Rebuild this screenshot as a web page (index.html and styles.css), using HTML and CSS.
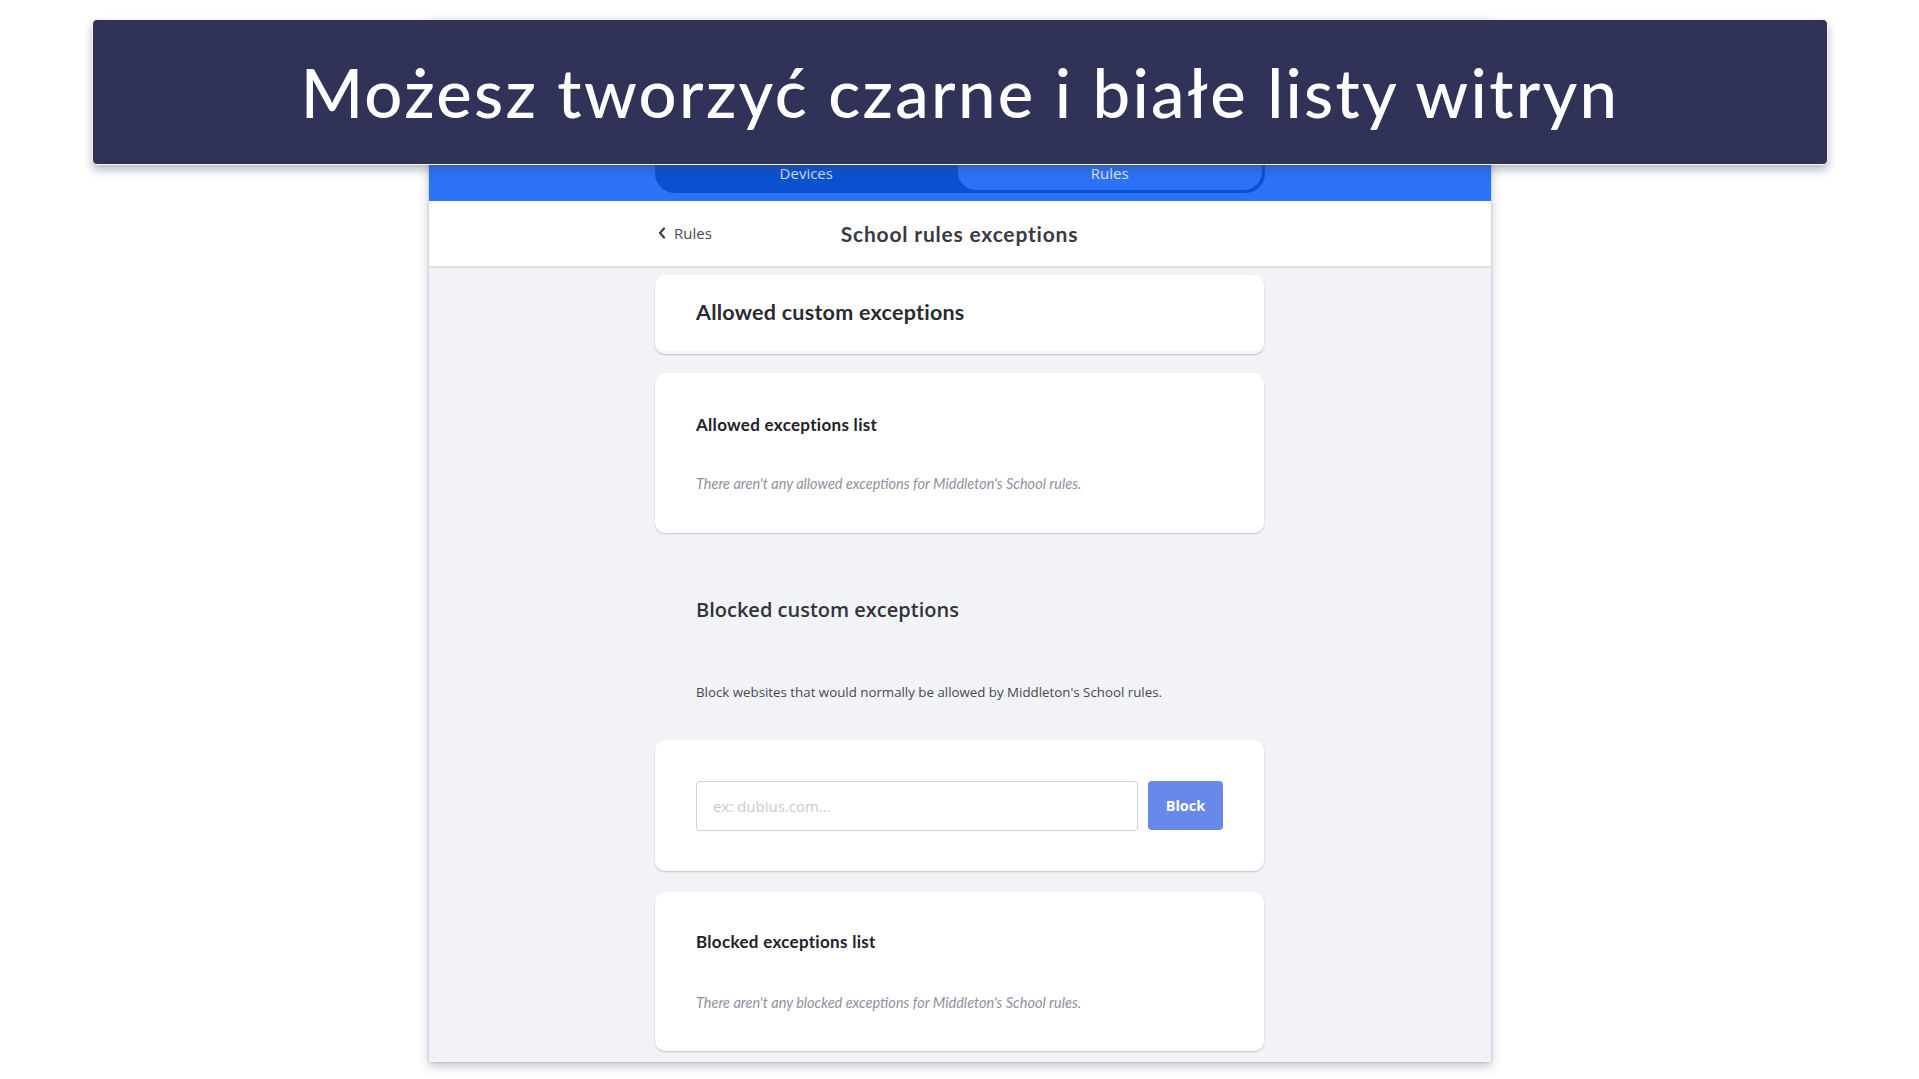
FILE: index.html
```html
<!DOCTYPE html>
<html lang="pl">
<head>
<meta charset="utf-8">
<title>School rules exceptions</title>
<link rel="stylesheet" href="styles.css">
</head>
<body>
<div class="stage">
  <div class="banner"><h1>Możesz tworzyć czarne i białe listy witryn</h1></div>
  <div class="panel">
    <div class="topbar">
      <div class="tabs">
        <div class="tab">Devices</div>
        <div class="tab active">Rules</div>
      </div>
    </div>
    <div class="header">
      <div class="header-inner">
        <a class="back"><svg width="8" height="12" viewBox="0 0 8 12"><polyline points="6,1.5 2,6 6,10.5" fill="none" stroke="#3c3c46" stroke-width="2.2" stroke-linejoin="round" stroke-linecap="round"/></svg><span>Rules</span></a>
        <h2 class="title">School rules exceptions</h2>
        <span></span>
      </div>
    </div>
    <div class="content">
      <div class="card card-head">
        <h3 class="card-title">Allowed custom exceptions</h3>
      </div>
      <div class="card card-list">
        <h4 class="list-title">Allowed exceptions list</h4>
        <p class="empty">There aren't any allowed exceptions for Middleton's School rules.</p>
      </div>
      <div class="section">
        <h3 class="section-title">Blocked custom exceptions</h3>
        <p class="section-desc">Block websites that would normally be allowed by Middleton's School rules.</p>
      </div>
      <div class="card card-form">
        <input class="site-input" type="text" placeholder="ex: dubius.com...">
        <button class="block-btn">Block</button>
      </div>
      <div class="card card-list last">
        <h4 class="list-title">Blocked exceptions list</h4>
        <p class="empty">There aren't any blocked exceptions for Middleton's School rules.</p>
      </div>
    </div>
  </div>
</div>
</body>
</html>
```
FILE: styles.css
```css
* { box-sizing: border-box; }
html, body { margin: 0; padding: 0; background: #ffffff; }
body { font-family: "Lato", "Open Sans", sans-serif; }

.stage {
  position: relative;
  width: 1919px;
  height: 1079px;
  overflow: hidden;
  padding-top: 20px;
}

.banner {
  position: absolute;
  left: 92px;
  top: 19px;
  width: 1736px;
  height: 146px;
  background: #303257;
  border: 1px solid #f4f4f8;
  border-radius: 5px;
  box-shadow: 0 5px 9px rgba(60, 62, 90, 0.35);
  display: flex;
  align-items: center;
  justify-content: center;
  z-index: 5;
}
.banner h1 {
  margin: 0;
  color: #ffffff;
  font-family: "Lato", sans-serif;
  font-weight: 500;
  font-size: 67px;
  letter-spacing: 2.3px;
}

.panel {
  width: 1062px;
  height: 1042px;
  margin: 0 auto;
  background: #f2f3f7;
  box-shadow: 0 4px 10px rgba(70, 80, 120, 0.35), 0 0 2px rgba(0, 0, 0, 0.2);
  display: flex;
  flex-direction: column;
}

.topbar {
  height: 181px;
  background: #2c72f7;
  flex: none;
}
.tabs {
  width: 610px;
  height: 173px;
  margin: 0 auto;
  background: #0c50d2;
  border-radius: 0 0 20px 20px;
  display: flex;
}
.tab {
  flex: 1;
  display: flex;
  align-items: flex-end;
  justify-content: center;
  padding-bottom: 10px;
  font-family: "Open Sans", sans-serif;
  font-size: 15px;
  color: #d3def7;
}
.tab.active {
  background: #2c72f7;
  border-radius: 0 0 18px 18px;
  margin: 0 3px 3px 0;
  padding-bottom: 7px;
  color: #e0e8fb;
}

.header {
  height: 67px;
  background: #ffffff;
  border-bottom: 2px solid #dfe0e5;
  flex: none;
}
.header-inner {
  width: 609px;
  height: 100%;
  margin: 0 auto;
  display: grid;
  grid-template-columns: 1fr auto 1fr;
  align-items: center;
}
.back {
  display: flex;
  align-items: center;
  gap: 8px;
  padding-left: 3px;
  font-family: "Open Sans", sans-serif;
  font-size: 15px;
  color: #4c4c56;
  margin-top: -2px;
}
.title {
  margin: 0;
  font-family: "Lato", sans-serif;
  font-weight: 700;
  font-size: 21px;
  color: #393945;
  letter-spacing: 0.8px;
}

.content {
  width: 609px;
  margin: 0 auto;
  padding-top: 7px;
  display: flex;
  flex-direction: column;
}

.card {
  background: #ffffff;
  border-radius: 10px;
  box-shadow: 0 1px 2px rgba(0, 0, 0, 0.2);
  padding-left: 41px;
  padding-right: 41px;
}

.card-head {
  height: 79px;
  padding-top: 25px;
  border-bottom: 3px solid #f6f6f9;
}
.card-title {
  margin: 0;
  font-family: "Lato", sans-serif;
  font-weight: 700;
  font-size: 21.5px;
  line-height: 24px;
  letter-spacing: 0.25px;
  color: #2a2a34;
}

.card-list {
  margin-top: 19px;
  height: 160px;
  padding-top: 42px;
}
.card-list.last { margin-top: 21px; height: 159px; padding-top: 40px; }
.list-title {
  margin: 0;
  font-family: "Lato", sans-serif;
  font-weight: 700;
  font-size: 17px;
  line-height: 20px;
  letter-spacing: 0.3px;
  color: #22222c;
}
.empty {
  margin: 40px 0 0;
  font-family: "Lato", sans-serif;
  font-style: italic;
  font-weight: 400;
  font-size: 14.5px;
  line-height: 18px;
  color: #9090a0;
}
.card-list.last .empty { margin-top: 42px; }

.section {
  padding: 65px 0 0 41px;
  height: 207px;
}
.section-title {
  margin: 0;
  font-family: "Open Sans", sans-serif;
  font-weight: 600;
  font-size: 20px;
  line-height: 24px;
  color: #33333d;
}
.section-desc {
  margin: 61px 0 0;
  font-family: "Open Sans", sans-serif;
  font-size: 13.3px;
  line-height: 18px;
  color: #484852;
}

.card-form {
  height: 131px;
  display: flex;
  align-items: flex-start;
  padding-top: 41px;
  gap: 10px;
}
.site-input {
  width: 442px;
  height: 50px;
  border: 1px solid #d3d4dc;
  border-radius: 3px;
  padding: 0 16px;
  font-family: "Open Sans", sans-serif;
  font-size: 15px;
  color: #333;
  background: #fff;
  outline: none;
}
.site-input::placeholder { color: #c9cad3; }
.block-btn {
  width: 75px;
  height: 49px;
  border: none;
  border-radius: 4px;
  background: #6889ea;
  color: #ffffff;
  font-family: "Open Sans", sans-serif;
  font-weight: 700;
  font-size: 14.5px;
  padding: 0;
}
```
